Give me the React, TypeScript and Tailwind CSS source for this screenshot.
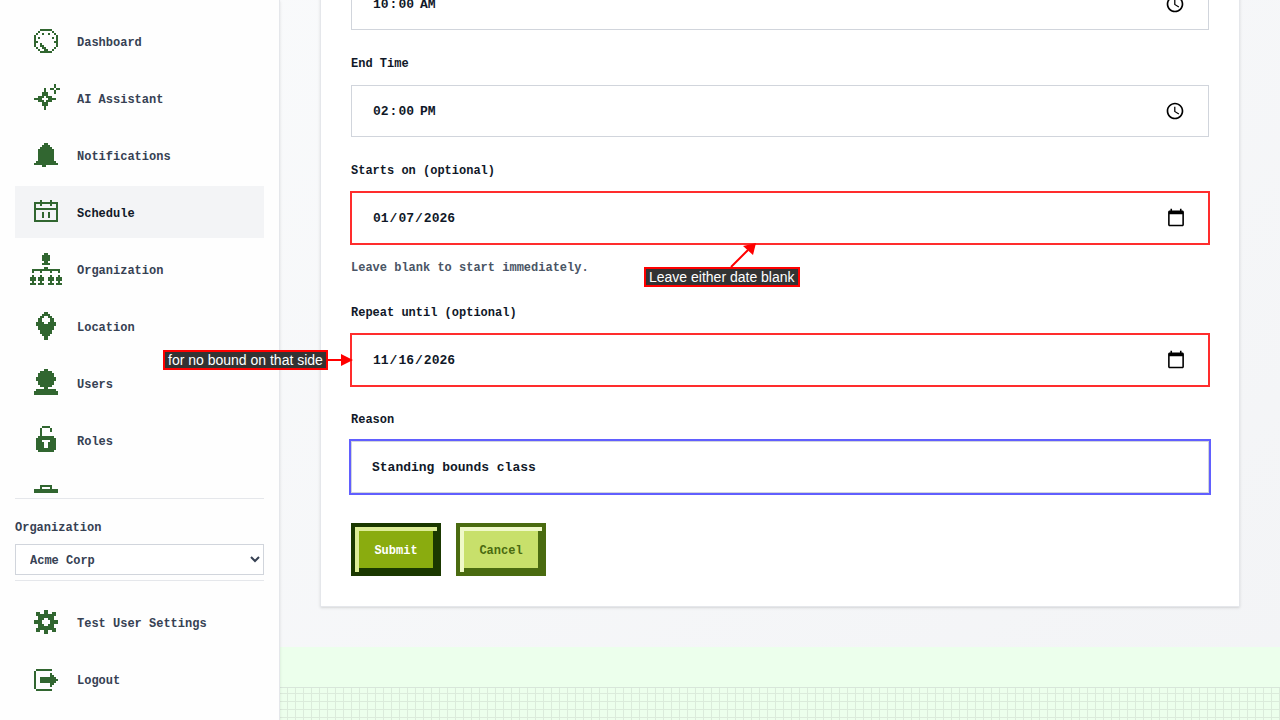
const icons: Record<string, string[]> = {
  dashboard: [
    '',
    '',
    '.....######.....',
    '....#......#....',
    '...#..#..#..#...',
    '..#..........#..',
    '..#.#......#.#..',
    '..#..........#..',
    '..##........##..',
    '..#..#.......#..',
    '..#..##......#..',
    '...#..##....#...',
    '....#..##..#....',
    '.....######.....',
  ],
  sparkle: [
    '',
    '............#...',
    '............#...',
    '.......#..##.##.',
    '.......#....#...',
    '......###...#...',
    '......###.......',
    '....###.###.....',
    '..####...####...',
    '....###.###.....',
    '......###.......',
    '......###.......',
    '.......#........',
    '.......#........',
  ],
  bell: [
    '',
    '',
    '.......##.......',
    '......####......',
    '.....######.....',
    '....########....',
    '....########....',
    '....########....',
    '....########....',
    '....########....',
    '....########....',
    '...##########...',
    '..############..',
    '......##........',
  ],
  calendar: [
    '',
    '',
    '.....#....#.....',
    '..############..',
    '..#..#....#..#..',
    '..#..........#..',
    '..############..',
    '..#..........#..',
    '..#...#..#...#..',
    '..#...#..#...#..',
    '..#...#..#...#..',
    '..#..........#..',
    '..############..',
  ],
  organization: [
    '.......##.......',
    '......####......',
    '......####......',
    '......####......',
    '.......##.......',
    '......####......',
    '',
    '.......##.......',
    '.##############.',
    '.#...#....#...#.',
    '',
    '.#...#....#...#.',
    '###.###..###.###',
    '###.###..###.###',
    '.#...#....#...#.',
    '###.###..###.###',
  ],
  location: [
    '',
    '.......##.......',
    '......####......',
    '.....##..##.....',
    '....##....##....',
    '....##....##....',
    '...####..####...',
    '...##########...',
    '....########....',
    '....########....',
    '.....######.....',
    '.....######.....',
    '......####......',
    '.......##.......',
    '.......##.......',
  ],
  users: [
    '',
    '.......##.......',
    '.....######.....',
    '....########....',
    '....########....',
    '...##########...',
    '...##########...',
    '....########....',
    '....########....',
    '.....######.....',
    '.......##.......',
    '...##########...',
    '..############..',
    '..############..',
  ],
  roles: [
    '',
    '......####......',
    '.....#....#.....',
    '.....#....#.....',
    '.....#..........',
    '.....#..........',
    '....########....',
    '...##########...',
    '...###....###...',
    '...####..####...',
    '...####..####...',
    '...####..####...',
    '...##########...',
    '....########....',
  ],
  briefcase: [
    '',
    '',
    '.....######.....',
    '.....#....#.....',
    '..############..',
    '..############..',
    '..############..',
    '..############..',
    '..############..',
    '..############..',
    '..############..',
    '..############..',
  ],
  gear: [
    '',
    '',
    '.......##.......',
    '...##..##..##...',
    '...##########...',
    '....########....',
    '....###..###....',
    '..####....####..',
    '..####....####..',
    '....###..###....',
    '....########....',
    '...##########...',
    '...##..##..##...',
    '.......##.......',
  ],
  logout: [
    '',
    '',
    '',
    '...########.....',
    '..#.............',
    '..#.......#.....',
    '..#.......##....',
    '..#..########...',
    '..#..#########..',
    '..#..########...',
    '..#.......##....',
    '..#.......#.....',
    '..#.............',
    '...########.....',
  ],
}

function PixelIcon({ name }: { name: string }) {
  return (
    <svg viewBox="0 0 16 16" className="size-8 shrink-0 fill-[#316630]" shapeRendering="crispEdges" aria-hidden="true">
      {icons[name].flatMap((row, y) =>
        [...row].map((cell, x) => (cell === '#' ? <rect key={`${x}-${y}`} x={x} y={y} width="1" height="1" /> : null))
      )}
    </svg>
  )
}

function NavItem({ icon, label, active }: { icon: string; label?: string; active?: boolean }) {
  return (
    <a
      href="#"
      aria-label={label ? undefined : icon}
      aria-current={active ? 'page' : undefined}
      className={`flex h-[52px] shrink-0 items-center gap-[15px] px-[15px] text-[12px] leading-5 font-bold ${
        active ? 'bg-gray-100 text-gray-900' : 'text-gray-700'
      }`}
    >
      <PixelIcon name={icon} />
      {label && <span className="pt-1">{label}</span>}
    </a>
  )
}

const navItems = [
  { icon: 'dashboard', label: 'Dashboard' },
  { icon: 'sparkle', label: 'AI Assistant' },
  { icon: 'bell', label: 'Notifications' },
  { icon: 'calendar', label: 'Schedule', active: true },
  { icon: 'organization', label: 'Organization' },
  { icon: 'location', label: 'Location' },
  { icon: 'users', label: 'Users' },
  { icon: 'roles', label: 'Roles' },
  { icon: 'briefcase' },
]

function Sidebar() {
  return (
    <aside className="relative z-10 flex h-screen w-[280px] shrink-0 flex-col border-r border-gray-200 bg-[#fefefe] p-[15px] shadow-sm">
      <nav className="flex min-h-0 flex-1 flex-col gap-[5px] overflow-hidden">
        {navItems.map((item) => (
          <NavItem key={item.icon} {...item} />
        ))}
      </nav>

      {/* Organization switcher */}
      <div className="mt-[5px] flex flex-col border-y border-gray-200 pt-[19px] pb-[5px]">
        <label htmlFor="org" className="mb-1.5 text-[12px] leading-5 font-bold text-gray-700">
          Organization
        </label>
        <select
          id="org"
          className="h-[31px] w-full border border-gray-300 bg-white pt-[3px] pl-2.5 text-[12px] font-bold text-gray-700"
        >
          <option>Acme Corp</option>
        </select>
      </div>

      <div className="flex flex-col gap-[5px] pt-[15px]">
        <NavItem icon="gear" label="Test User Settings" />
        <NavItem icon="logout" label="Logout" />
      </div>
    </aside>
  )
}

type FieldProps = {
  id: string
  label?: string
  type: string
  value: string
  hint?: string
  tone?: 'plain' | 'marked' | 'focused'
}

const tones = {
  plain: 'border-gray-300',
  marked: 'border-[#ff2d2d] ring-1 ring-[#ff2d2d]',
  focused: 'border-gray-300 ring-2 ring-[#615fff]',
}

function Field({ id, label, type, value, hint, tone = 'plain' }: FieldProps) {
  return (
    <div className="flex flex-col">
      {label && (
        <label htmlFor={id} className="mb-[11px] pt-px text-[12px] leading-5 font-bold text-gray-900">
          {label}
        </label>
      )}
      <input
        id={id}
        type={type}
        defaultValue={value}
        aria-label={label ? undefined : id}
        className={`h-[52px] w-full border bg-white px-5 pt-px text-[13px] font-bold text-gray-900 outline-none [&::-webkit-calendar-picker-indicator]:mb-0.5 [&::-webkit-calendar-picker-indicator]:size-5 ${tones[tone]}`}
      />
      {hint && <p className="mt-[13px] text-[12px] leading-[22px] font-bold text-gray-600">{hint}</p>}
    </div>
  )
}

function Note({ children }: { children: string }) {
  return (
    <div className="border-2 border-[#ff0000] bg-[#333333] px-[3px] font-['Liberation_Sans',Arial,sans-serif] text-[14px] leading-4 whitespace-nowrap text-white">
      {children}
    </div>
  )
}

export default function App() {
  return (
    <div className="relative flex h-screen overflow-hidden bg-[#ecffec] font-['Liberation_Mono',monospace]">
      <Sidebar />

      <div className="flex min-w-0 flex-1 flex-col justify-end">
        <main className="bg-linear-to-br from-gray-50 to-gray-100 p-10">
          <form className="flex flex-col gap-[23px] border border-gray-200 bg-white p-[30px] shadow-sm">
            <Field id="start-time" type="time" value="10:00" />
            <Field id="end-time" label="End Time" type="time" value="14:00" />
            <Field
              id="starts-on"
              label="Starts on (optional)"
              type="date"
              value="2026-01-07"
              hint="Leave blank to start immediately."
              tone="marked"
            />
            <Field id="repeat-until" label="Repeat until (optional)" type="date" value="2026-11-16" tone="marked" />
            <Field id="reason" label="Reason" type="text" value="Standing bounds class" tone="focused" />

            <div className="flex gap-[15px] pt-[7px]">
              <button
                type="button"
                className="h-[53px] w-[90px] border-4 border-[#1a3800] bg-[#8aac0f] pt-0.5 text-[12px] font-bold text-white shadow-[inset_4px_4px_0_#dcec96,inset_-4px_-4px_0_#1a3800]"
              >
                Submit
              </button>
              <button
                type="button"
                className="h-[53px] w-[90px] border-4 border-[#4a6b10] bg-[#c8e06b] pt-0.5 text-[12px] font-bold text-[#4a6b10] shadow-[inset_4px_4px_0_#eff9c8,inset_-4px_-4px_0_#4a6b10]"
              >
                Cancel
              </button>
            </div>
          </form>
        </main>

        <footer className="pt-10">
          <div className="h-[33px] border-t border-[#d8e6da] bg-[linear-gradient(to_right,#dbebdb_1px,transparent_1px),linear-gradient(to_bottom,#dbebdb_1px,transparent_1px)] bg-size-[8px_8px] bg-position-[7px_5px]" />
        </footer>
      </div>

      {/* Callouts drawn over the form */}
      <div className="absolute top-[267px] left-[644px] z-20">
        <Note>Leave either date blank</Note>
      </div>
      <div className="absolute top-[350px] left-[163px] z-20">
        <Note>for no bound on that side</Note>
      </div>
      <svg className="pointer-events-none absolute inset-0 z-20 size-full" aria-hidden="true">
        <path d="M731 267 L748 250 M328 360 H343" stroke="#ff0000" strokeWidth="2" />
        <path d="M756 243 L753 255 L743 246 Z M353 360 L341 366 V354 Z" fill="#ff0000" />
      </svg>
    </div>
  )
}
